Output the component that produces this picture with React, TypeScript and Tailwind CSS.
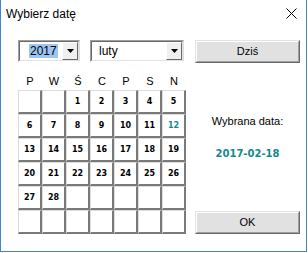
import React from "react";

const days = ["P", "W", "Ś", "C", "P", "S", "N"];
const cells: (number | null)[] = [
  null,
  null,
  ...Array.from({ length: 28 }, (_, i) => i + 1),
  ...Array.from({ length: 12 }, () => null),
];

function Arrow() {
  return (
    <svg width="7" height="4" viewBox="0 0 7 4">
      <path d="M0 0H7L3.5 4Z" fill="#000" />
    </svg>
  );
}

function Combo({ w, children }: { w: string; children: React.ReactNode }) {
  return (
    <div className={`${w} h-[22px] border-t border-l border-t-[#a0a0a0] border-l-[#a0a0a0] border-b border-r border-b-white border-r-[#dcdcdc]`}>
      <div className="h-full flex bg-white border-t border-l border-t-[#696969] border-l-[#696969] border-b border-r border-b-[#e3e3e3] border-r-[#e3e3e3]">
        <div className="flex-1 flex items-center">{children}</div>
        <div className="w-[16px] flex items-center justify-center bg-[#f0f0f0] border-t border-l border-t-white border-l-white border-b border-r border-b-[#696969] border-r-[#696969]">
          <Arrow />
        </div>
      </div>
    </div>
  );
}

function Button({ label }: { label: string }) {
  return (
    <div className="h-[23px] w-[105px] bg-[#e1e1e1] border-t border-l border-t-[#e3e3e3] border-l-[#e3e3e3] border-b border-r border-b-[#696969] border-r-[#696969]">
      <div className="h-full flex items-center justify-center border-t border-l border-t-white border-l-white border-b border-r border-b-[#a0a0a0] border-r-[#a0a0a0] text-[11px] text-black">
        {label}
      </div>
    </div>
  );
}

export default function App() {
  return (
    <div
      className="w-[307px] h-[252px] bg-white border-l border-r border-b border-[#3f85cf] text-black"
      style={{ fontFamily: '"Liberation Sans", Arial, sans-serif' }}
    >
      <div className="h-[27px] flex items-center justify-between pl-[5px] pr-[9px]">
        <span className="text-[12px]">Wybierz datę</span>
        <svg width="11" height="11" viewBox="0 0 11 11">
          <path d="M0.5 0.5L10.5 10.5M10.5 0.5L0.5 10.5" stroke="#000" strokeWidth="1" />
        </svg>
      </div>

      <div className="mt-[13px] flex">
        <div className="ml-[17px] w-[168px]">
          <div className="flex gap-[10px]">
            <Combo w="w-[62px]">
              <span className="ml-[9px] px-[1px] h-[14px] leading-[14px] bg-[#9bc5f2] text-[12px]">2017</span>
            </Combo>
            <Combo w="w-[94px]">
              <span className="ml-[7px] text-[12px]">luty</span>
            </Combo>
          </div>

          <div className="mt-[10px] h-[18px] grid grid-cols-7 items-center text-[11px]">
            {days.map((d, i) => (
              <div key={i} className="text-center">{d}</div>
            ))}
          </div>

          <div className="grid grid-cols-7">
            {cells.map((c, i) => (
              <div
                key={i}
                className="h-[24px] flex items-center justify-center bg-white border-t border-l border-t-[#dcdcdc] border-l-[#dcdcdc] border-b-2 border-r-2 border-b-[#7a7a7a] border-r-[#7a7a7a]"
              >
                {c !== null && (
                  <span
                    className={`text-[8px] font-bold ${c === 12 ? "text-[#13898f]" : "text-black"}`}
                    style={{ fontFamily: '"DejaVu Sans", Verdana, sans-serif' }}
                  >
                    {c}
                  </span>
                )}
              </div>
            ))}
          </div>
        </div>

        <div className="ml-[9px] w-[105px] flex flex-col">
          <Button label="Dziś" />
          <div className="mt-[50px] text-center text-[11px]">Wybrana data:</div>
          <div
            className="mt-[16px] text-center text-[10px] font-bold text-[#13898f]"
            style={{ fontFamily: '"DejaVu Sans", Verdana, sans-serif' }}
          >
            2017-02-18
          </div>
          <div className="mt-[50px]">
            <Button label="OK" />
          </div>
        </div>
      </div>
    </div>
  );
}
